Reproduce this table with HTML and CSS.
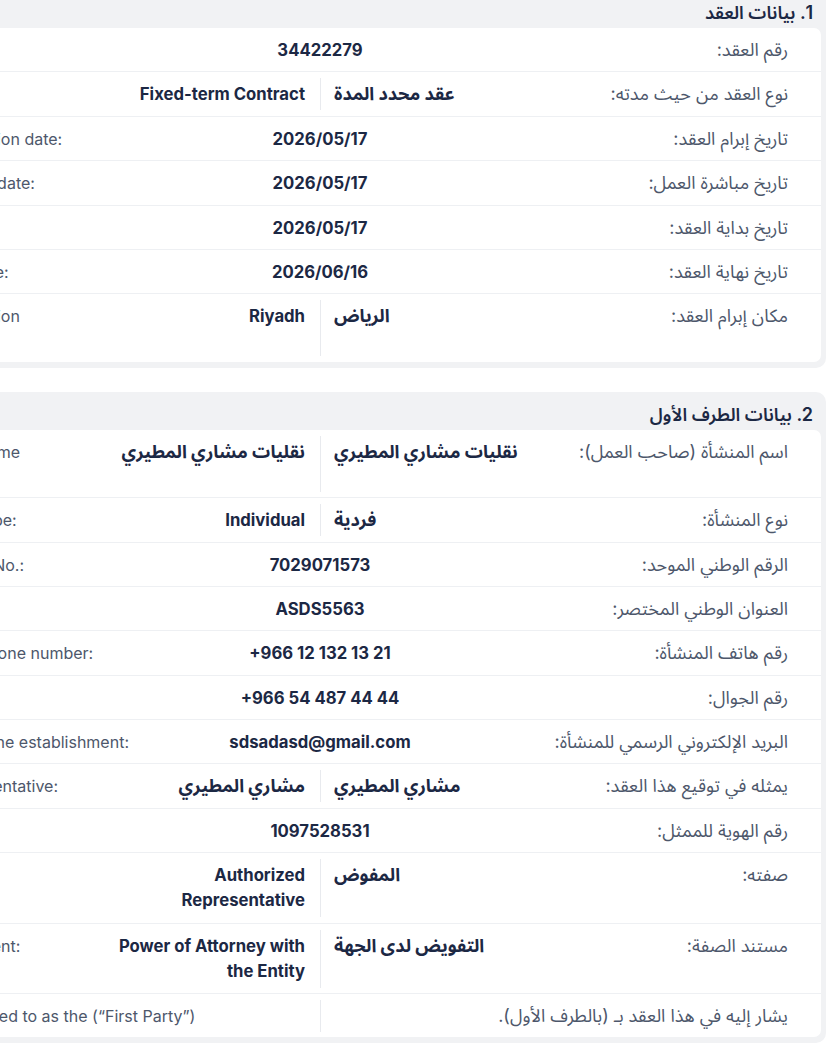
FILE: index.html
```html
<!DOCTYPE html>
<html lang="ar" dir="rtl">
<head>
<meta charset="utf-8">
<title>بيانات العقد</title>
<link rel="stylesheet" href="styles.css">
</head>
<body>
<main class="page">
  <section class="card">
    <h2 class="card-title">1. بيانات العقد</h2>
    <div class="card-body">
      <div class="row">
        <div class="label-ar">رقم العقد:</div>
        <div class="value-single" dir="ltr">34422279</div>
        <div class="label-en" dir="ltr">Contract No.:</div>
      </div>
      <div class="row">
        <div class="label-ar">نوع العقد من حيث مدته:</div>
        <div class="value-ar">عقد محدد المدة</div>
        <div class="value-en" dir="ltr">Fixed-term Contract</div>
        <div class="label-en" dir="ltr">Contract type:</div>
      </div>
      <div class="row">
        <div class="label-ar">تاريخ إبرام العقد:</div>
        <div class="value-single" dir="ltr">2026/05/17</div>
        <div class="label-en" dir="ltr">Contract conclusion date:</div>
      </div>
      <div class="row">
        <div class="label-ar">تاريخ مباشرة العمل:</div>
        <div class="value-single" dir="ltr">2026/05/17</div>
        <div class="label-en" dir="ltr">Commencement date:</div>
      </div>
      <div class="row">
        <div class="label-ar">تاريخ بداية العقد:</div>
        <div class="value-single" dir="ltr">2026/05/17</div>
        <div class="label-en" dir="ltr">Start date:</div>
      </div>
      <div class="row">
        <div class="label-ar">تاريخ نهاية العقد:</div>
        <div class="value-single" dir="ltr">2026/06/16</div>
        <div class="label-en" dir="ltr">Contract end date:</div>
      </div>
      <div class="row">
        <div class="label-ar">مكان إبرام العقد:</div>
        <div class="value-ar">الرياض</div>
        <div class="value-en" dir="ltr">Riyadh</div>
        <div class="label-en" dir="ltr">Contract conclusion<br>location:</div>
      </div>
    </div>
  </section>

  <section class="card">
    <h2 class="card-title">2. بيانات الطرف الأول</h2>
    <div class="card-body">
      <div class="row">
        <div class="label-ar">اسم المنشأة (صاحب العمل):</div>
        <div class="value-ar">نقليات مشاري المطيري</div>
        <div class="value-en ar" dir="ltr">نقليات مشاري المطيري</div>
        <div class="label-en" dir="ltr">Establishment name<br>(Employer):</div>
      </div>
      <div class="row">
        <div class="label-ar">نوع المنشأة:</div>
        <div class="value-ar">فردية</div>
        <div class="value-en" dir="ltr">Individual</div>
        <div class="label-en" dir="ltr">Establishment type:</div>
      </div>
      <div class="row">
        <div class="label-ar">الرقم الوطني الموحد:</div>
        <div class="value-single" dir="ltr">7029071573</div>
        <div class="label-en" dir="ltr">Unified National No.:</div>
      </div>
      <div class="row">
        <div class="label-ar">العنوان الوطني المختصر:</div>
        <div class="value-single" dir="ltr">ASDS5563</div>
        <div class="label-en" dir="ltr">Short address:</div>
      </div>
      <div class="row">
        <div class="label-ar">رقم هاتف المنشأة:</div>
        <div class="value-single" dir="ltr">+966 12 132 13 21</div>
        <div class="label-en" dir="ltr">Establishment phone number:</div>
      </div>
      <div class="row">
        <div class="label-ar">رقم الجوال:</div>
        <div class="value-single" dir="ltr">+966 54 487 44 44</div>
        <div class="label-en" dir="ltr">Mobile number:</div>
      </div>
      <div class="row">
        <div class="label-ar">البريد الإلكتروني الرسمي للمنشأة:</div>
        <div class="value-single" dir="ltr">sdsadasd@gmail.com</div>
        <div class="label-en" dir="ltr">Official email of the establishment:</div>
      </div>
      <div class="row">
        <div class="label-ar">يمثله في توقيع هذا العقد:</div>
        <div class="value-ar">مشاري المطيري</div>
        <div class="value-en ar" dir="ltr">مشاري المطيري</div>
        <div class="label-en" dir="ltr">Signatory representative:</div>
      </div>
      <div class="row">
        <div class="label-ar">رقم الهوية للممثل:</div>
        <div class="value-single" dir="ltr">1097528531</div>
        <div class="label-en" dir="ltr">ID number:</div>
      </div>
      <div class="row">
        <div class="label-ar">صفته:</div>
        <div class="value-ar">المفوض</div>
        <div class="value-en tall" dir="ltr">Authorized Representative</div>
        <div class="label-en" dir="ltr">Capacity:</div>
      </div>
      <div class="row">
        <div class="label-ar">مستند الصفة:</div>
        <div class="value-ar">التفويض لدى الجهة</div>
        <div class="value-en tall" dir="ltr">Power of Attorney with the Entity</div>
        <div class="label-en" dir="ltr">Capacity document:</div>
      </div>
      <div class="row">
        <div class="note-ar">يشار إليه في هذا العقد بـ (بالطرف الأول).</div>
        <div class="note-en" dir="ltr">Hereinafter referred to as the (“First Party”)</div>
      </div>
    </div>
  </section>
</main>
</body>
</html>
```

FILE: styles.css
```css
html {
  overflow-x: hidden;
}

body {
  margin: 0;
  background: #ffffff;
  font-family: Inter, "Noto Sans Arabic", "DejaVu Sans", sans-serif;
  color: #1c2844;
}

.page {
  width: 995px;
  margin: -10px 2px 0 0;
  display: flex;
  flex-direction: column;
  gap: 24px;
}

.card {
  background: #f1f2f4;
  border-radius: 10px;
  padding: 0 5px 6px;
}

.card-title {
  margin: 0;
  padding: 11px 8px 3px;
  font-size: 18px;
  line-height: 24px;
  font-weight: 600;
  color: #1c2844;
}

.card-body {
  background: #ffffff;
  border-radius: 7px;
}

.row {
  display: grid;
  grid-template-columns: 285px 216px 216px minmax(0, 1fr);
  padding: 6px 0 5.4px;
  border-bottom: 1px solid #eef0f3;
  font-size: 16px;
  line-height: 24px;
}

.row:last-child {
  border-bottom: 0;
}

.label-ar,
.label-en,
.note-ar,
.note-en {
  color: #4d576b;
  font-weight: 400;
}

.label-ar,
.value-ar,
.note-ar,
.ar {
  font-size: 18px;
}

.label-ar {
  padding: 4px 33px 4px 8px;
  white-space: nowrap;
}

.value-ar {
  padding: 4px 6px 4px 13px;
  text-align: left;
  font-weight: 700;
  border-left: 1px solid #e8eaee;
}

.value-en {
  padding: 4px 15px 4px 0;
  text-align: right;
  font-weight: 700;
  font-size: 16.7px;
}

.value-en.ar {
  font-size: 18px;
}

.value-en.tall {
  line-height: 25px;
}

.value-single {
  grid-column: span 2;
  padding: 4px;
  text-align: center;
  font-weight: 700;
  font-size: 16.7px;
}

.label-en {
  padding: 4px 8px 4px 32px;
  text-align: left;
  white-space: nowrap;
}

.note-ar {
  grid-column: span 2;
  padding: 4px 33px 4px 13px;
  white-space: nowrap;
  border-left: 1px solid #e8eaee;
}

.note-en {
  grid-column: span 2;
  padding: 4px 8px 4px 32px;
  text-align: left;
  white-space: nowrap;
}
```
